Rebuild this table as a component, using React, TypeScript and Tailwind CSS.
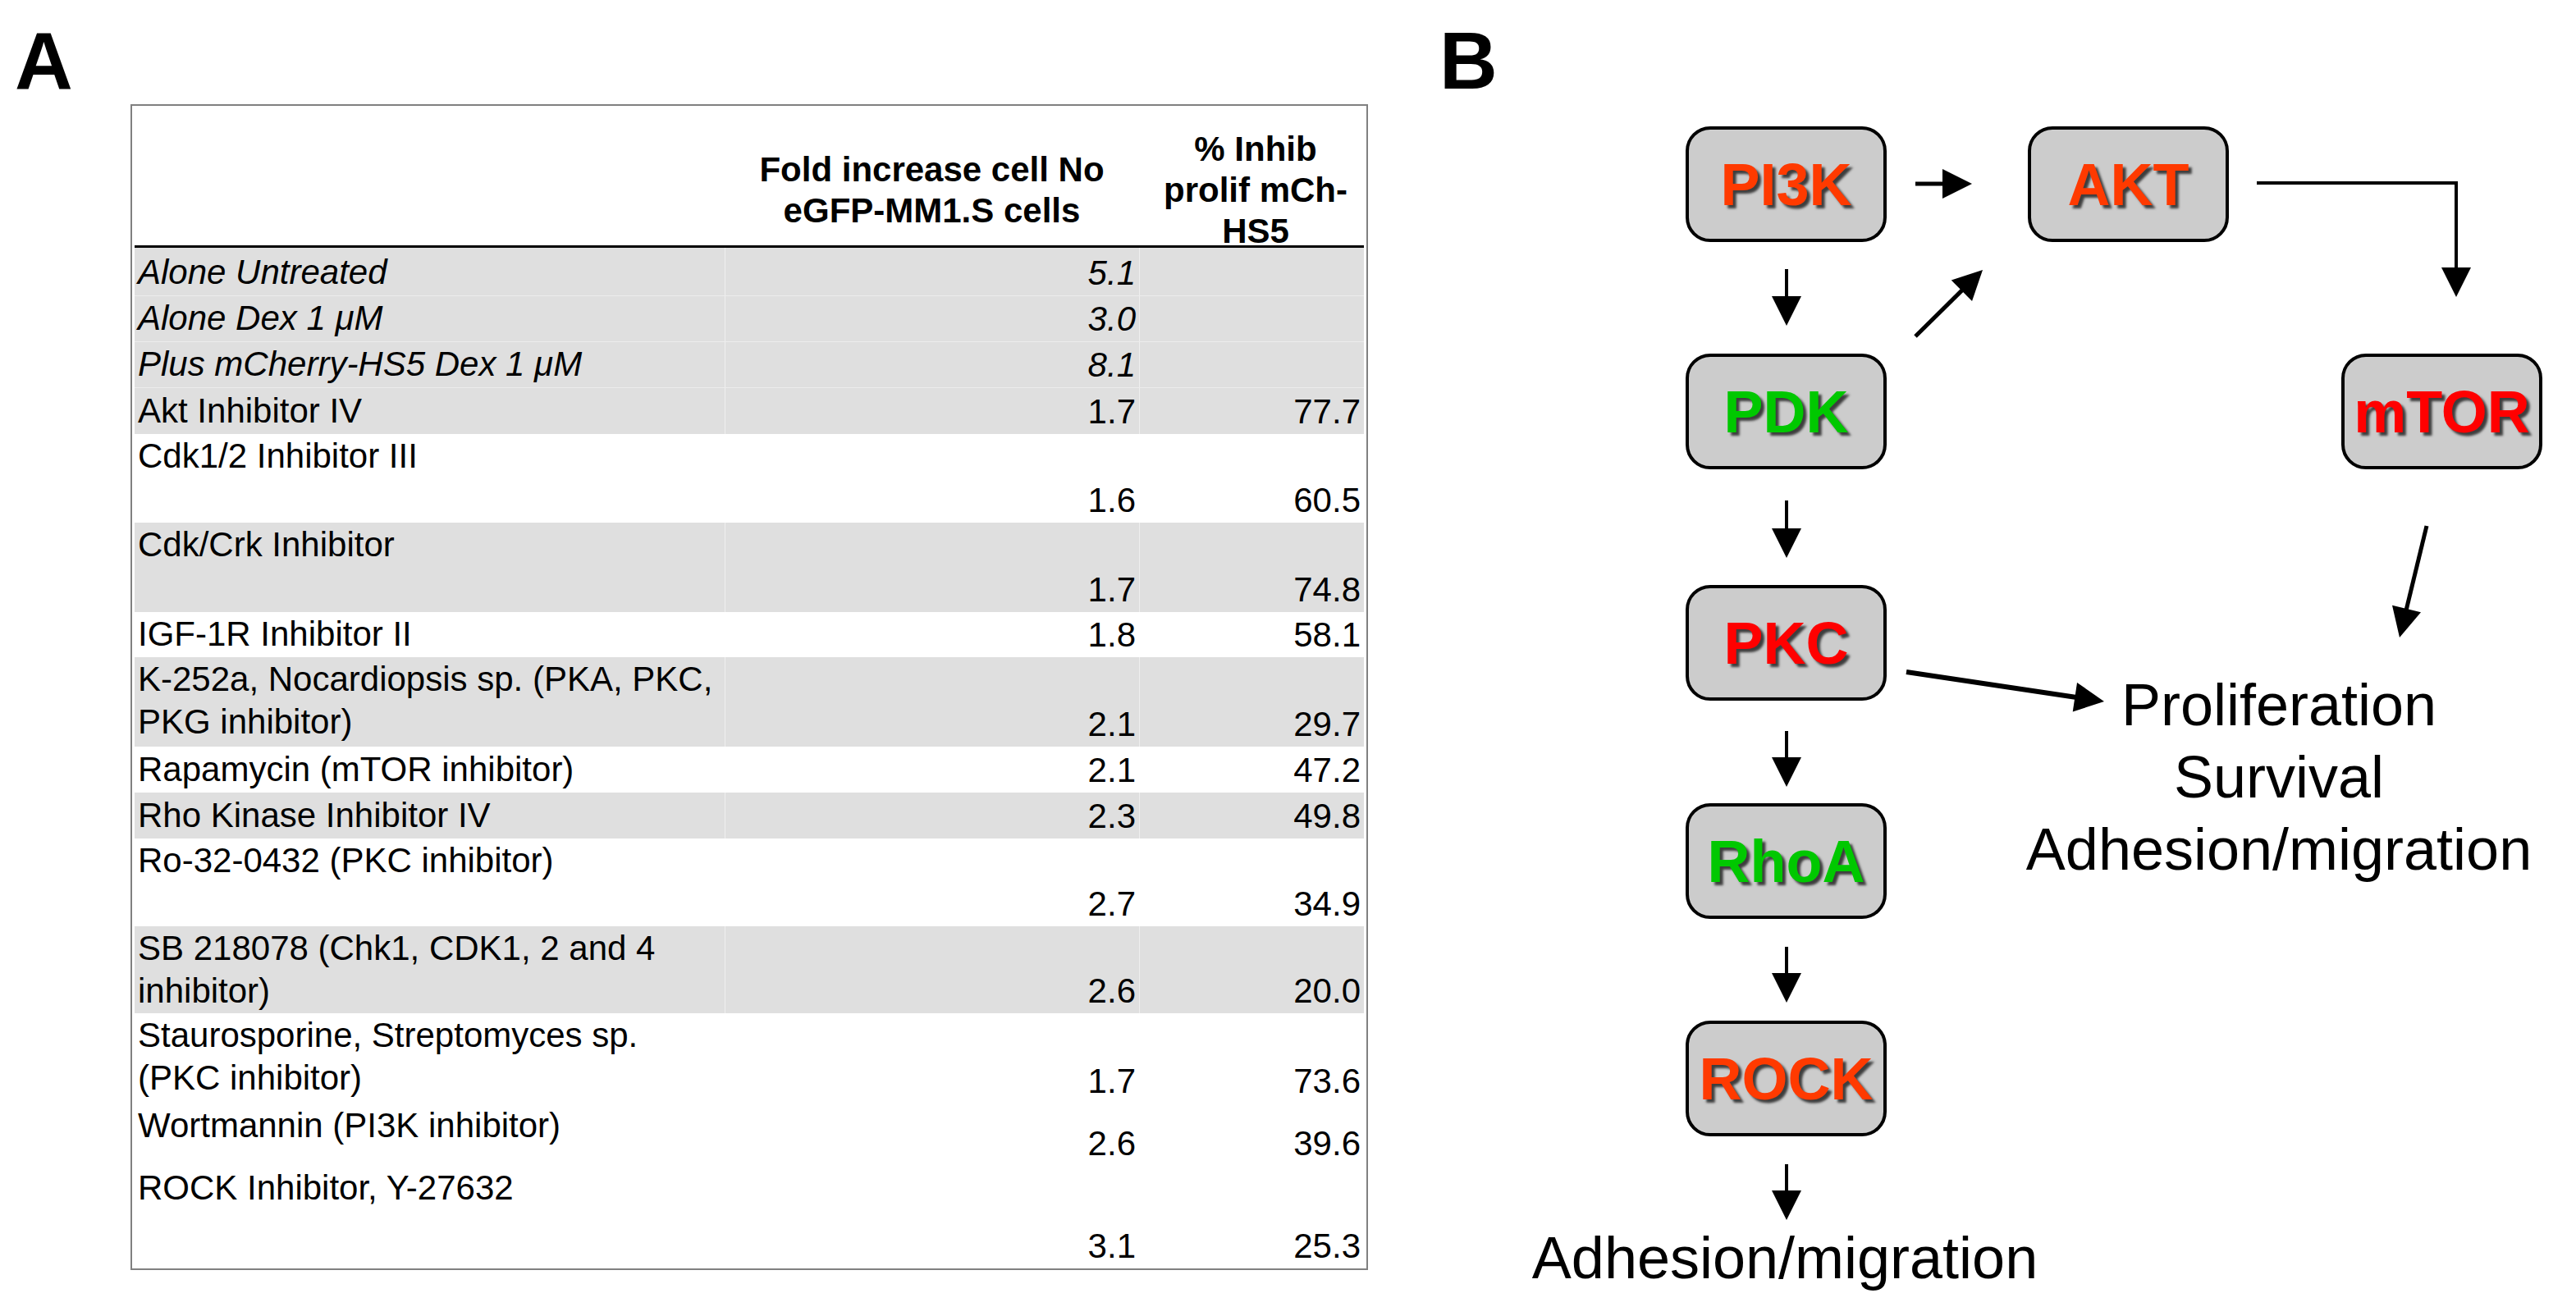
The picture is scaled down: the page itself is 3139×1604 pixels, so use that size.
import React from "react";

type Row = {
  lines: string[];
  fold: string;
  inhib: string;
  h: string;
  gray?: boolean;
  italic?: boolean;
  top?: boolean;
};

const rows: Row[] = [
  { lines: ["Alone Untreated"], fold: "5.1", inhib: "", h: "h-[59px]", gray: true, italic: true },
  { lines: ["Alone Dex 1 \u03bcM"], fold: "3.0", inhib: "", h: "h-[56px]", gray: true, italic: true },
  { lines: ["Plus mCherry-HS5 Dex 1 \u03bcM"], fold: "8.1", inhib: "", h: "h-[56px]", gray: true, italic: true },
  { lines: ["Akt Inhibitor IV"], fold: "1.7", inhib: "77.7", h: "h-[56px]", gray: true },
  { lines: ["Cdk1/2 Inhibitor III"], fold: "1.6", inhib: "60.5", h: "h-[108px]", top: true },
  { lines: ["Cdk/Crk Inhibitor"], fold: "1.7", inhib: "74.8", h: "h-[109px]", gray: true, top: true },
  { lines: ["IGF-1R Inhibitor II"], fold: "1.8", inhib: "58.1", h: "h-[55px]" },
  { lines: ["K-252a, Nocardiopsis sp. (PKA, PKC,", "PKG inhibitor)"], fold: "2.1", inhib: "29.7", h: "h-[109px]", gray: true, top: true },
  { lines: ["Rapamycin (mTOR inhibitor)"], fold: "2.1", inhib: "47.2", h: "h-[56px]" },
  { lines: ["Rho Kinase Inhibitor IV"], fold: "2.3", inhib: "49.8", h: "h-[56px]", gray: true },
  { lines: ["Ro-32-0432 (PKC inhibitor)"], fold: "2.7", inhib: "34.9", h: "h-[107px]", top: true },
  { lines: ["SB 218078 (Chk1, CDK1, 2 and 4", "inhibitor)"], fold: "2.6", inhib: "20.0", h: "h-[106px]", gray: true, top: true },
  { lines: ["Staurosporine, Streptomyces sp.", "(PKC inhibitor)"], fold: "1.7", inhib: "73.6", h: "h-[110px]", top: true },
  { lines: ["Wortmannin (PI3K inhibitor)"], fold: "2.6", inhib: "39.6", h: "h-[76px]", top: true },
  { lines: ["ROCK Inhibitor, Y-27632"], fold: "3.1", inhib: "25.3", h: "h-[125px]", top: true },
];

const nodes = [
  { label: "PI3K", pos: "left-[304px] top-[31px]", color: "text-[#ff3a00]" },
  { label: "AKT", pos: "left-[721px] top-[31px]", color: "text-[#ff3a00]" },
  { label: "PDK", pos: "left-[304px] top-[308px]", color: "text-[#00c800]" },
  { label: "mTOR", pos: "left-[1103px] top-[308px]", color: "text-[#ff0000]" },
  { label: "PKC", pos: "left-[304px] top-[590px]", color: "text-[#ff0000]" },
  { label: "RhoA", pos: "left-[304px] top-[856px]", color: "text-[#00c800]" },
  { label: "ROCK", pos: "left-[304px] top-[1121px]", color: "text-[#ff3a00]" },
];

// straight arrows: start point, tip, stroke width
const arrows = [
  [584, 101, 653, 101, 5],
  [427, 205, 427, 274, 4],
  [584, 287, 666, 206, 5],
  [427, 487, 427, 557, 4],
  [1207, 518, 1174, 654, 5],
  [573, 696, 814, 732, 6],
  [427, 768, 427, 836, 4],
  [427, 1031, 427, 1099, 4],
  [427, 1296, 427, 1364, 4],
];

function Arrow({ x1, y1, x2, y2, w }: { x1: number; y1: number; x2: number; y2: number; w: number }) {
  const len = Math.hypot(x2 - x1, y2 - y1);
  const ux = (x2 - x1) / len;
  const uy = (y2 - y1) / len;
  const bx = x2 - ux * 36;
  const by = y2 - uy * 36;
  const nx = -uy * 18;
  const ny = ux * 18;
  return (
    <g>
      <line x1={x1} y1={y1} x2={bx + ux * 2} y2={by + uy * 2} stroke="black" strokeWidth={w} />
      <polygon points={`${x2},${y2} ${bx + nx},${by + ny} ${bx - nx},${by - ny}`} fill="black" />
    </g>
  );
}

function Table() {
  return (
    <div className="ml-[159px] mt-[4px] w-[1508px] border-2 border-[#808080] px-[3px]">
      <div className="grid h-[173px] grid-cols-[719px_505px_274px] items-center border-b-[3px] border-black pt-[28px] text-[42px] font-bold leading-[50px]">
        <div />
        <div className="text-center">
          Fold increase cell No
          <br />
          eGFP-MM1.S cells
        </div>
        <div className="pl-[10px] text-center">
          % Inhib
          <br />
          prolif mCh-
          <br />
          HS5
        </div>
      </div>
      {rows.map((r, i) => (
        <div
          key={i}
          className={`grid grid-cols-[719px_505px_274px] text-[42px] leading-[52px] ${r.h} ${r.gray ? "bg-[#dfdfdf]" : "bg-white"} ${r.italic ? "italic border-b border-white/40" : ""}`}
        >
          <div className={`pl-[4px] whitespace-nowrap ${r.top ? "self-start pt-[1px]" : "self-end pb-[2px]"}`}>
            {r.lines.map((l) => (
              <div key={l}>{l}</div>
            ))}
          </div>
          <div className="flex items-end justify-end border-l border-white/50 pr-[4px] pb-[1px]">{r.fold}</div>
          <div className="flex items-end justify-end border-l border-white/50 pr-[4px] pb-[1px] not-italic">{r.inhib}</div>
        </div>
      ))}
    </div>
  );
}

function Diagram() {
  return (
    <div className="relative flex-1">
      <svg className="absolute left-0 top-0" width="1389" height="1481" viewBox="0 0 1389 1481">
        {arrows.map(([x1, y1, x2, y2, w], i) => (
          <Arrow key={i} x1={x1} y1={y1} x2={x2} y2={y2} w={w} />
        ))}
        <polyline points="1000,100 1243,100 1243,205" fill="none" stroke="black" strokeWidth={4} />
        <polygon points="1243,239 1225,203 1261,203" fill="black" />
      </svg>
      {nodes.map((n) => (
        <div
          key={n.label}
          className={`absolute ${n.pos} flex h-[141px] w-[245px] items-center justify-center rounded-[30px] border-4 border-black bg-[#cccccc]`}
        >
          <span className={`text-[72px] font-bold leading-none ${n.color} [text-shadow:4px_4px_3px_rgba(0,0,0,0.7)]`}>
            {n.label}
          </span>
        </div>
      ))}
      <div className="absolute left-[627px] top-[692px] w-[800px] text-center text-[72px] leading-[88px]">
        Proliferation
        <br />
        Survival
        <br />
        Adhesion/migration
      </div>
      <div className="absolute left-[25px] top-[1374px] w-[800px] text-center text-[72px] leading-none">
        Adhesion/migration
      </div>
    </div>
  );
}

export default function App() {
  return (
    <div className="flex h-[1604px] w-[3139px] overflow-hidden bg-white font-['Liberation_Sans',Arial,sans-serif] text-black">
      <section className="w-[1750px] shrink-0">
        <div className="pl-[18px] pt-[25px] text-[98px] font-bold leading-none">A</div>
        <Table />
      </section>
      <section className="flex flex-1 flex-col">
        <div className="pl-[4px] pt-[25px] text-[98px] font-bold leading-none">B</div>
        <Diagram />
      </section>
    </div>
  );
}
